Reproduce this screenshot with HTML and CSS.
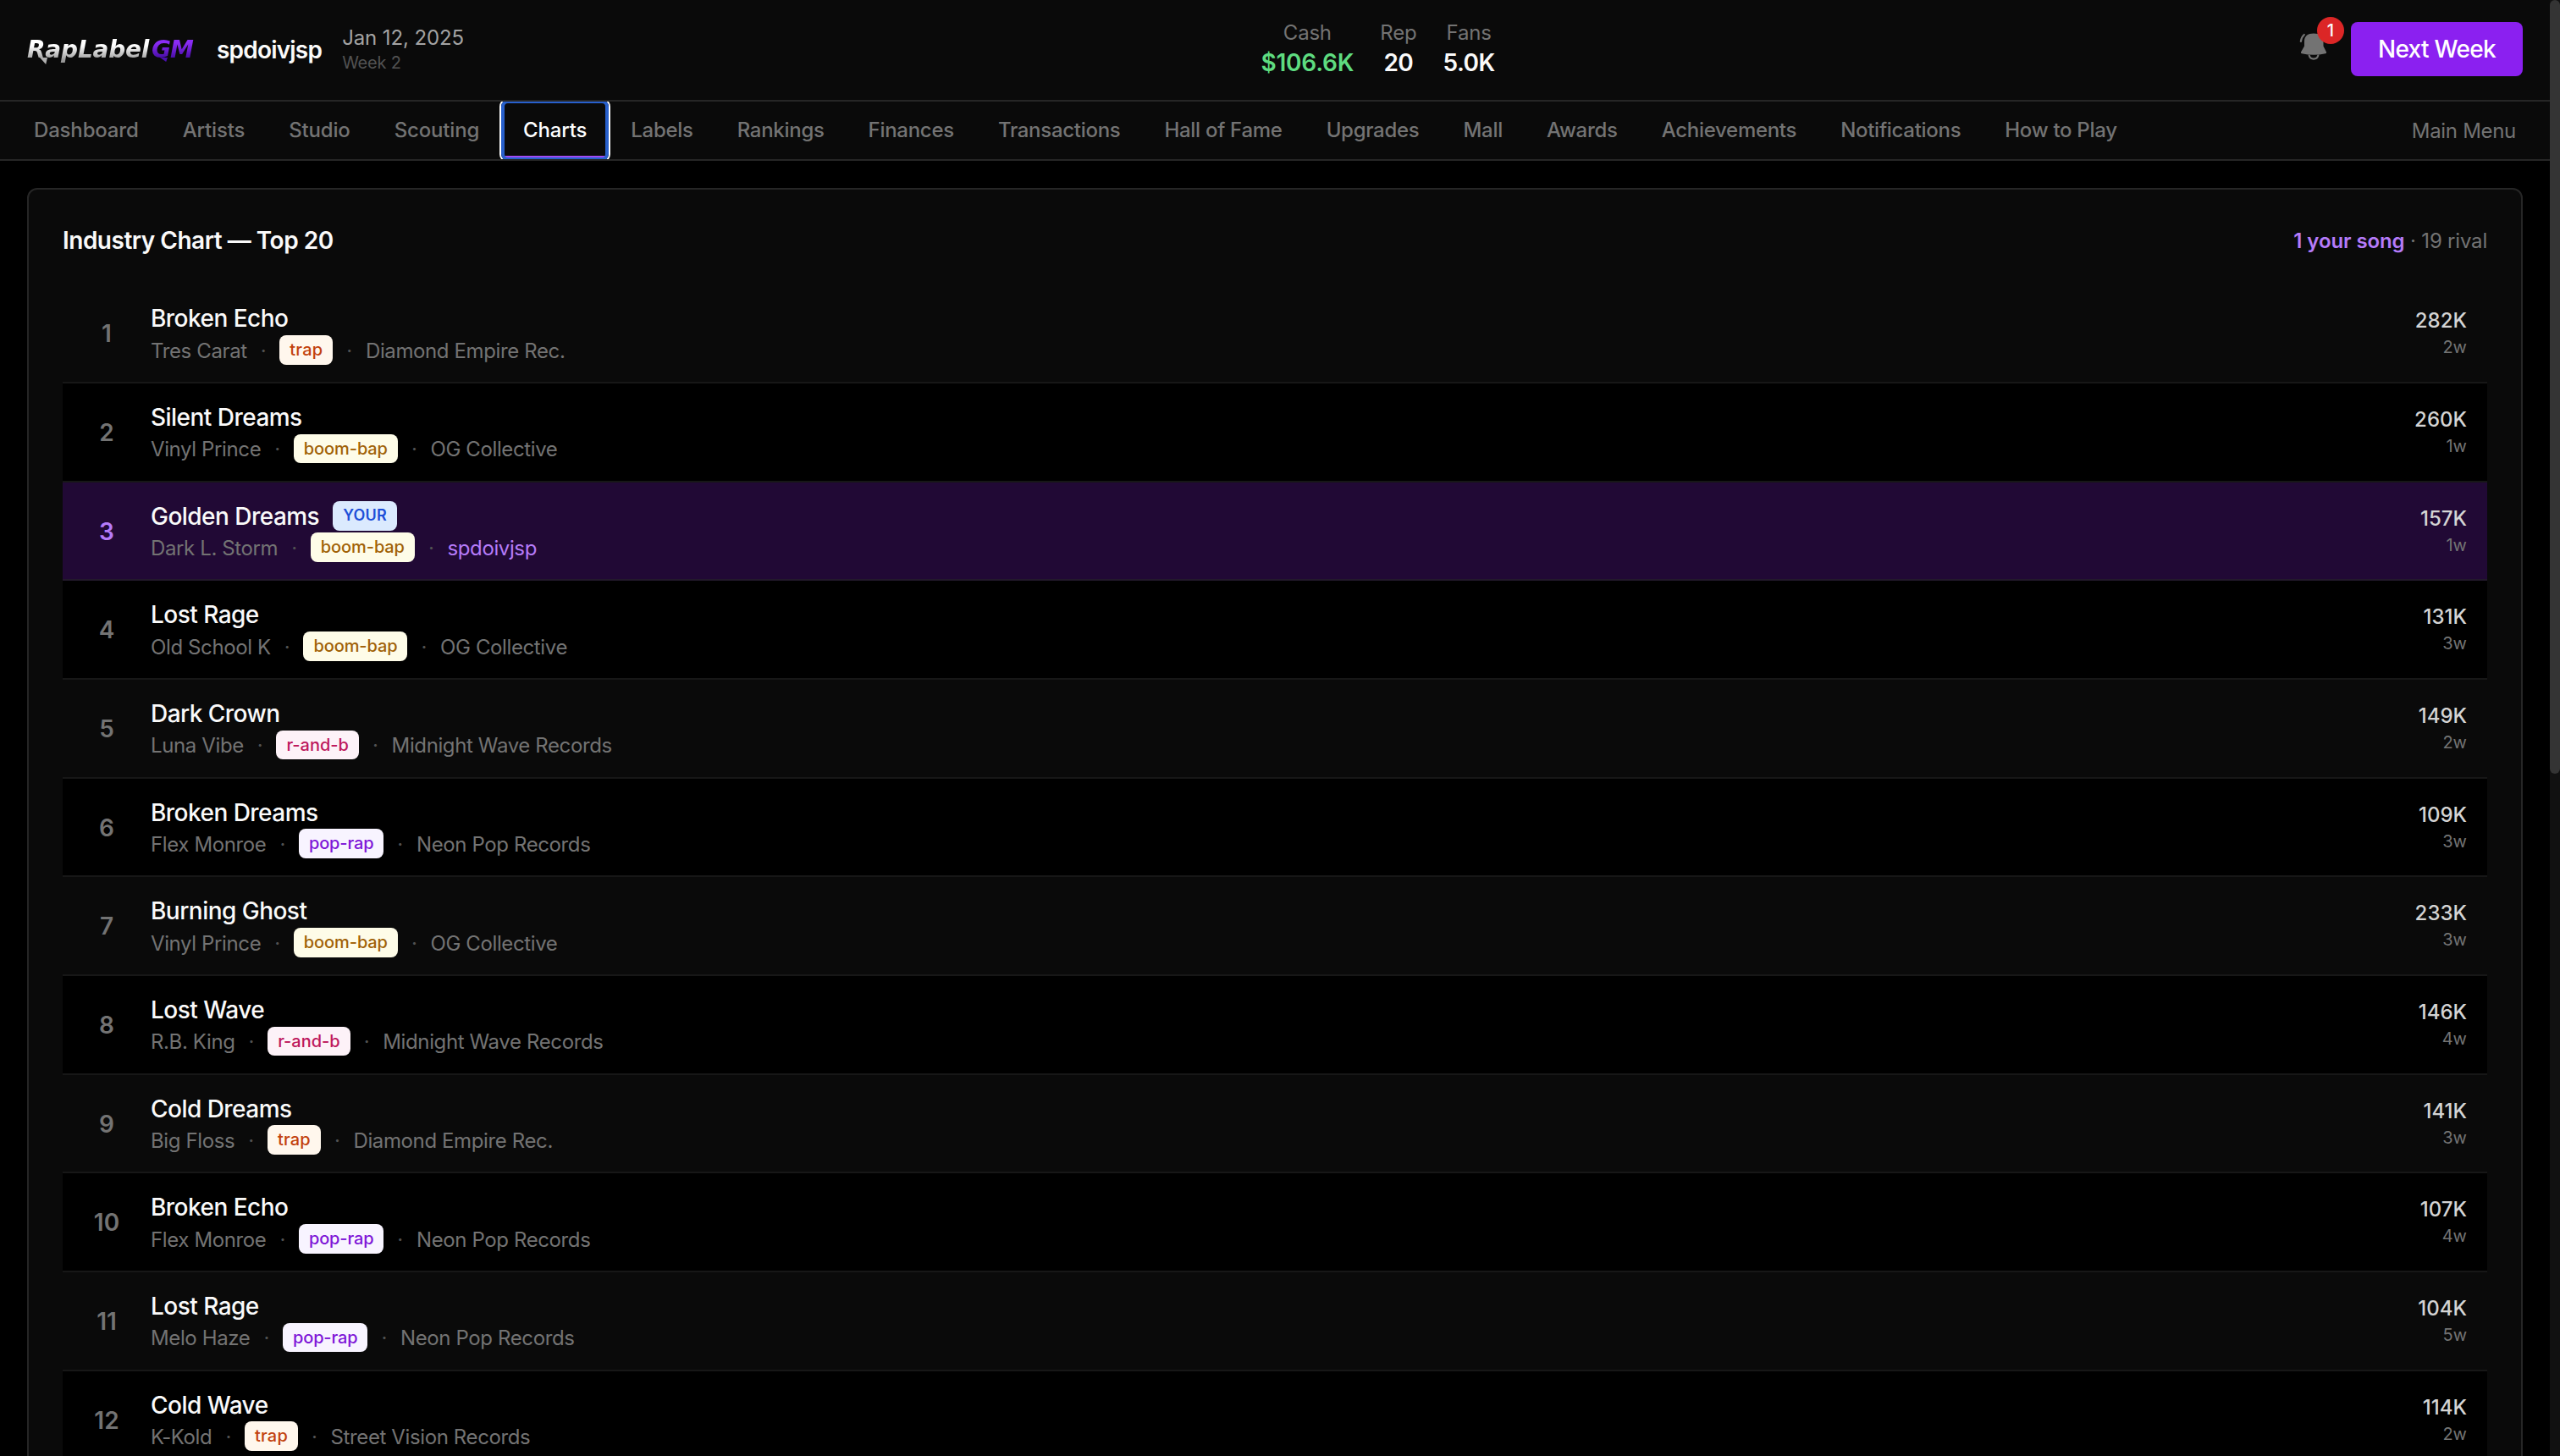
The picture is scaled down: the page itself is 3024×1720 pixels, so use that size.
FILE: index.html
```html
<!DOCTYPE html>
<html lang="en">
<head>
<meta charset="utf-8">
<title>RapLabelGM</title>
<link rel="stylesheet" href="styles.css">
</head>
<body>
<div class="app">
  <header class="topbar">
    <div class="brand">
      <div class="logo"><span class="logo-main">RapLabel</span><span class="logo-gm">GM</span></div>
      <span class="label-name">spdoivjsp</span>
      <div class="date"><span class="day">Jan 12, 2025</span><span class="week">Week 2</span></div>
    </div>
    <div class="stats">
      <div class="stat"><span class="stat-key">Cash</span><span class="stat-value cash">$106.6K</span></div>
      <div class="stat"><span class="stat-key">Rep</span><span class="stat-value">20</span></div>
      <div class="stat"><span class="stat-key">Fans</span><span class="stat-value">5.0K</span></div>
    </div>
    <div class="actions">
      <div class="bell">
        <svg viewBox="0 0 40 40" width="40" height="40" fill="#737373"><path d="M11 17C11 10.500 15 7.500 22 7.500S33.500 10.500 33.500 17V22.500L37 29.500Q37.500 31 36 31.200Q22 34.300 8 31.200Q6.500 31 7 29.500L11 22.500Z"/><path d="M16.700 33.500A5.500 5.500 0 0 0 27.300 33.500M6.800 17Q7.400 12 10.800 9" fill="none" stroke="#737373" stroke-width="2.200" stroke-linecap="round"/></svg>
        <span class="count">1</span>
      </div>
      <button class="next">Next Week</button>
    </div>
  </header>
  <nav class="tabs">
    <a class="tab">Dashboard</a><a class="tab">Artists</a><a class="tab">Studio</a><a class="tab">Scouting</a><a class="tab active">Charts</a><a class="tab">Labels</a><a class="tab">Rankings</a><a class="tab">Finances</a><a class="tab">Transactions</a><a class="tab">Hall of Fame</a><a class="tab">Upgrades</a><a class="tab">Mall</a><a class="tab">Awards</a><a class="tab">Achievements</a><a class="tab">Notifications</a><a class="tab">How to Play</a>
    <a class="menu">Main Menu</a>
  </nav>
  <main class="content">
    <section class="card">
      <div class="card-head"><h1>Industry Chart — Top 20</h1><p class="summary"><strong>1 your song</strong> · 19 rival</p></div>
      <div class="rows">
        <div class="row"><span class="rank">1</span><div class="song"><div class="title">Broken Echo</div><div class="meta">Tres Carat<i>·</i><span class="tag trap">trap</span><i>·</i>Diamond Empire Rec.</div></div><div class="plays"><b>282K</b><small>2w</small></div></div>
        <div class="row"><span class="rank">2</span><div class="song"><div class="title">Silent Dreams</div><div class="meta">Vinyl Prince<i>·</i><span class="tag boom">boom-bap</span><i>·</i>OG Collective</div></div><div class="plays"><b>260K</b><small>1w</small></div></div>
        <div class="row mine"><span class="rank">3</span><div class="song"><div class="title">Golden Dreams<span class="tag your">YOUR</span></div><div class="meta">Dark L. Storm<i>·</i><span class="tag boom">boom-bap</span><i>·</i><span class="own">spdoivjsp</span></div></div><div class="plays"><b>157K</b><small>1w</small></div></div>
        <div class="row"><span class="rank">4</span><div class="song"><div class="title">Lost Rage</div><div class="meta">Old School K<i>·</i><span class="tag boom">boom-bap</span><i>·</i>OG Collective</div></div><div class="plays"><b>131K</b><small>3w</small></div></div>
        <div class="row"><span class="rank">5</span><div class="song"><div class="title">Dark Crown</div><div class="meta">Luna Vibe<i>·</i><span class="tag rnb">r-and-b</span><i>·</i>Midnight Wave Records</div></div><div class="plays"><b>149K</b><small>2w</small></div></div>
        <div class="row"><span class="rank">6</span><div class="song"><div class="title">Broken Dreams</div><div class="meta">Flex Monroe<i>·</i><span class="tag pop">pop-rap</span><i>·</i>Neon Pop Records</div></div><div class="plays"><b>109K</b><small>3w</small></div></div>
        <div class="row"><span class="rank">7</span><div class="song"><div class="title">Burning Ghost</div><div class="meta">Vinyl Prince<i>·</i><span class="tag boom">boom-bap</span><i>·</i>OG Collective</div></div><div class="plays"><b>233K</b><small>3w</small></div></div>
        <div class="row"><span class="rank">8</span><div class="song"><div class="title">Lost Wave</div><div class="meta">R.B. King<i>·</i><span class="tag rnb">r-and-b</span><i>·</i>Midnight Wave Records</div></div><div class="plays"><b>146K</b><small>4w</small></div></div>
        <div class="row"><span class="rank">9</span><div class="song"><div class="title">Cold Dreams</div><div class="meta">Big Floss<i>·</i><span class="tag trap">trap</span><i>·</i>Diamond Empire Rec.</div></div><div class="plays"><b>141K</b><small>3w</small></div></div>
        <div class="row"><span class="rank">10</span><div class="song"><div class="title">Broken Echo</div><div class="meta">Flex Monroe<i>·</i><span class="tag pop">pop-rap</span><i>·</i>Neon Pop Records</div></div><div class="plays"><b>107K</b><small>4w</small></div></div>
        <div class="row"><span class="rank">11</span><div class="song"><div class="title">Lost Rage</div><div class="meta">Melo Haze<i>·</i><span class="tag pop">pop-rap</span><i>·</i>Neon Pop Records</div></div><div class="plays"><b>104K</b><small>5w</small></div></div>
        <div class="row"><span class="rank">12</span><div class="song"><div class="title">Cold Wave</div><div class="meta">K-Kold<i>·</i><span class="tag trap">trap</span><i>·</i>Street Vision Records</div></div><div class="plays"><b>114K</b><small>2w</small></div></div>
      </div>
    </section>
  </main>
</div>
<div class="scrollbar"><div class="thumb"></div></div>
</body>
</html>
```
FILE: styles.css
```css
* { box-sizing: border-box; }
body { margin: 0; height: 1720px; overflow: hidden; background: #000; color: #fafafa; font-family: Inter, "Liberation Sans", sans-serif; display: flex; }
.app { width: 3012px; height: 1720px; overflow: hidden; }
.scrollbar { width: 12px; height: 1720px; background: #111; }
.thumb { height: 914px; background: #343434; border-radius: 6px; }

.topbar { height: 120px; background: #0a0a0a; border-bottom: 2px solid #262626; padding: 0 32px; display: flex; justify-content: space-between; }
.brand { display: flex; align-items: center; }
.logo { position: relative; width: 200px; display: flex; font: italic bold 28px/34px "DejaVu Sans", sans-serif; white-space: nowrap; }
.logo-main { width: 147px; letter-spacing: -0.2px; background: linear-gradient(#fff 35%, #999 85%); -webkit-background-clip: text; color: transparent; }
.logo-gm { width: 53px; letter-spacing: -1px; background: linear-gradient(#8b2cf5 25%, #3f0a9c 85%); -webkit-background-clip: text; color: transparent; }
.logo::before, .logo::after { content: ""; position: absolute; top: 26px; width: 9px; height: 8px; background: #b0b0b0; clip-path: polygon(0 0, 100% 0, 80% 100%); }
.logo::before { left: 15px; }
.logo::after { left: 157px; height: 5px; background: #4a0fae; }
.label-name { font-size: 28px; font-weight: 600; letter-spacing: -0.8px; margin-left: 24px; }
.date { display: flex; flex-direction: column; margin-left: 24px; }
.day { font-size: 24px; line-height: 31px; letter-spacing: -0.1px; color: #a3a3a3; }
.week { font-size: 20px; line-height: 29px; color: #525252; letter-spacing: -0.2px; }
.stats { display: flex; gap: 31px; padding: 22px 4px 0 0; }
.stat { display: flex; flex-direction: column; align-items: center; }
.stat-key { font-size: 24px; line-height: 34px; color: #737373; letter-spacing: -0.2px; }
.stat-value { font-size: 28px; line-height: 37px; font-weight: 600; letter-spacing: -0.5px; }
.cash { color: #5edc80; letter-spacing: -0.2px; }
.actions { display: flex; align-items: flex-start; padding-top: 26px; }
.bell { position: relative; width: 40px; height: 40px; margin: 6px 26px 0 0; }
.bell svg { display: block; }
.count { position: absolute; left: 26px; top: -12px; width: 32px; height: 32px; border-radius: 50%; background: #dc2626; font-size: 20px; font-weight: 500; line-height: 32px; text-align: center; }
.next { width: 203px; height: 64px; border: 0; border-radius: 8px; background: #8b20f0; color: #fff; font: 500 28px Inter, sans-serif; letter-spacing: -0.7px; padding: 0; }

.tabs { height: 70px; background: #0a0a0a; border-bottom: 2px solid #262626; padding: 0 40px 0 16px; display: flex; overflow: hidden; }
.tab { height: 68px; padding: 0 24px; margin-right: 4px; font-size: 24px; font-weight: 500; letter-spacing: -0.29px; line-height: 67px; color: #737373; white-space: nowrap; }
.tab:nth-child(-n+5) { letter-spacing: -0.17px; }
.active { position: relative; height: 66px; color: #fff; border-bottom: 2px solid #a04bf5; }
.active::after { content: ""; position: absolute; inset: -2px -2px -6px; border: 4px solid #2860cc; border-radius: 8px; box-shadow: 0 0 0 2px #fff; }
.menu { margin-left: auto; font-size: 24px; line-height: 70px; letter-spacing: -0.3px; color: #737373; }

.content { padding: 32px 32px 0; }
.card { border: 2px solid #262626; border-radius: 12px; background: #0a0a0a; padding: 40px; height: 1700px; }
.card-head { height: 40px; display: flex; justify-content: space-between; align-items: center; }
h1 { margin: 0; font-size: 28px; font-weight: 600; letter-spacing: -0.5px; }
.summary { margin: 0; font-size: 24px; letter-spacing: -0.2px; color: #737373; }
.summary strong { color: #b57bfa; font-weight: 600; letter-spacing: -0.1px; }
.rows { margin-top: 32.333px; }
.row { height: 116.667px; border-bottom: 2px solid #171717; display: flex; padding: 20px 24px 0 32px; }
.row:nth-child(even) { background: #000; }
.row.mine { background: #210935; border-color: #23192c; }
.rank { width: 40px; text-align: center; font-size: 28px; line-height: 76px; font-weight: 600; color: #737373; }
.mine .rank, .own { color: #b57bfa; }
.song { margin-left: 32px; flex: 1; }
.title { height: 40px; line-height: 40px; font-size: 28px; font-weight: 500; letter-spacing: -0.53px; display: flex; align-items: center; }
.meta { height: 36px; font-size: 24px; letter-spacing: -0.38px; color: #737373; display: flex; align-items: center; white-space: nowrap; }
.meta i { width: 38.600px; text-align: center; font-style: normal; color: #525252; }
.tag { height: 34.667px; line-height: 34px; padding: 0 12px; border-radius: 8px; font-size: 20px; font-weight: 500; letter-spacing: 0; }
.meta .tag { margin-top: -2px; }
.trap { background: #fff7ed; color: #c2410c; letter-spacing: 0.2px; }
.boom { background: #fefce8; color: #a16207; letter-spacing: -0.1px; }
.rnb { background: #fdf2f8; color: #be185d; }
.pop { background: #f8f4ff; color: #7e16d8; letter-spacing: -0.15px; }
.your { background: #dbeafe; color: #1d4ed8; margin-left: 16px; font-size: 18px; font-weight: 600; letter-spacing: 0.2px; }
.plays { display: flex; flex-direction: column; align-items: flex-end; padding-top: 5px; }
.plays b { font-size: 24px; line-height: 36px; font-weight: 500; color: #d4d4d4; }
.plays small { font-size: 20px; line-height: 26px; color: #737373; }
```
